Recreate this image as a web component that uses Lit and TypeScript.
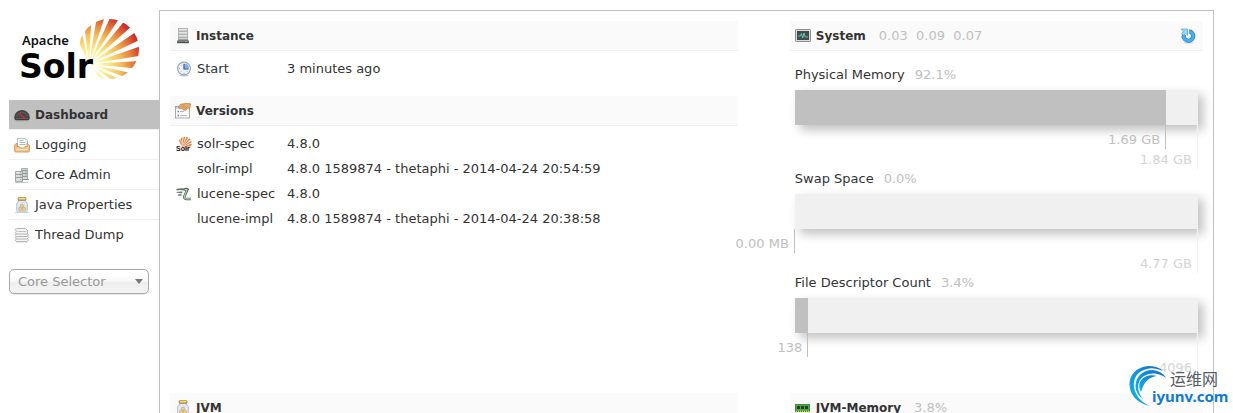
import { LitElement, html, svg, css } from "lit";
import { customElement, property } from "lit/decorators.js";

const icons: Record<string, unknown> = {
  dashboard: svg`
    <path d="M.8 9.800a7.200 6.300 0 0 1 14.400 0v1.600q0 1.600-1.600 1.600H2.400Q.8 13 .8 11.400z" fill="#484848" stroke="#2a2a2a" stroke-width=".7"/>
    <path d="M2.800 9a5.300 4.500 0 0 1 10.400 0" fill="none" stroke="#7c7c7c" stroke-dasharray="1 1.400"/>
    <path d="M2 11.500h12" stroke="#5e5e5e"/>
    <path d="M4.500 6l6.500 5.500" stroke="#d8272d" stroke-width="1.200"/>
    <path d="M2 14h12" stroke="#a8a8a8" stroke-width=".8"/>`,
  logging: svg`
    <path d="M3.500 1.500h7l3 2v8h-10z" fill="#fafcfc" stroke="#9fb3b8" stroke-width=".8"/>
    <path d="M5.500 3.500h4M5.500 5.500h6M5.500 7.500h6" stroke="#8fb9b4" stroke-width=".9"/>
    <path d="M.6 8l2.400-2v3.500h2l1 1.500h4l1-1.500h2V6l2.400 2v6q0 1-1 1H1.600q-1 0-1-1z" fill="#f3c48b" stroke="#c58a4c" stroke-width=".8"/>
    <path d="M2 12.500h12" stroke="#fbe3c1" stroke-width="1.500"/>`,
  cores: svg`
    <path d="M7.500 1.500h6v11h-6z" fill="#d4d7d9" stroke="#9a9ea1" stroke-width=".8"/>
    <path d="M8 3.500h5M8 6.500h5M8 9.500h5" stroke="#8c9195" stroke-width=".9"/>
    <path d="M1.500 4.500h7v10h-7z" fill="#dfe2e3" stroke="#94989b" stroke-width=".8"/>
    <path d="M2 7.500h6M2 10.500h6M9 12.500h6" stroke="#8c9195" stroke-width=".9"/>
    <path d="M6 6h1.500M6 9h1.500M6 12.500h1.500M11 5h1.500M11 8h1.500" stroke="#76a864" stroke-width=".8"/>
    <path d="M1 15.500h13" stroke="#c8c8c8"/>`,
  jar: svg`
    <path d="M4.500 3.500h7q-.3 1.700 1.800 2.800v7.200q0 1.500-1.500 1.500H4.200q-1.500 0-1.500-1.500V6.300q2.100-1.100 1.800-2.800z" fill="#dce9f5" stroke="#9db8cf" stroke-width=".8"/>
    <rect x="4" y=".6" width="8" height="2.800" rx="1" fill="#d6ac54" stroke="#a9853b" stroke-width=".7"/>
    <path d="M5 1.700h6" stroke="#f8e2a0"/>
    <circle cx="8" cy="8.800" r="1.700" fill="#f1cd8c" stroke="#cda263" stroke-width=".6"/>
    <circle cx="6.300" cy="12" r="1.800" fill="#f1cd8c" stroke="#cda263" stroke-width=".6"/>
    <circle cx="9.900" cy="12" r="1.800" fill="#f1cd8c" stroke="#cda263" stroke-width=".6"/>
    <path d="M1 15.500h14" stroke="#c5cbd0" stroke-width=".8"/>`,
  threads: svg`
    <g fill="#f5f5f5" stroke="#a2a2a2" stroke-width=".8">
      <path d="M2 12l1.500-1.500h9L14.500 13l-1.500 1.500H2.500l-1-1z"/>
      <path d="M2 9.500L3.500 8h9l2 2.500-1.500 1.500H2.500l-1-1z"/>
      <path d="M2 7l1.500-1.500h9l2 2.500-1.500 1.500H2.500l-1-1z"/>
      <path d="M1 2.500L2.500 1.500h9l2.500 2.500L13 7H2.500l-1-1.500 1-1.500z"/>
    </g><path d="M3.500 4.500h9" stroke="#b5b5b5" stroke-width=".8"/>
    <path d="M2 15.200h12" stroke="#ccc" stroke-width=".8"/>`,
  server: svg`
    <rect x="3.500" y=".5" width="9" height="12" fill="#cfcfcf" stroke="#a5a5a5" stroke-width=".8"/>
    <path d="M4 3.500h8M4 6.500h8M4 9.500h8" stroke="#a8a8a8" stroke-width=".8"/>
    <path d="M4 1.500h8M4 4.500h8M4 7.500h8" stroke="#e6e6e6"/>
    <path d="M3.300 11.500h9.400L14 13v2.300H2V13z" fill="#7a7a7a"/>
    <path d="M2 14.500h12" stroke="#505050"/><path d="M10 13.500h2" stroke="#55cc55"/>`,
  clock: svg`
    <ellipse cx="8" cy="14.500" rx="5" ry="1.100" fill="#ccc"/>
    <circle cx="8" cy="7.500" r="6.400" fill="#edf1f8" stroke="#98a2ae" stroke-width="1.100"/>
    <path d="M8.500 2.500a5 5 0 0 1 4.500 5H8.500z" fill="#86abee"/>
    <path d="M8 3v5h4.500" fill="none" stroke="#25437d" stroke-width="1.100"/>
    <path d="M3 7.500h1M8 12v1M4.500 4l.5.500M4.500 11l.5-.5M11.500 11l-.5-.5" stroke="#7d8896" stroke-width=".8"/>`,
  versions: svg`
    <rect x=".5" y="3.500" width="14" height="11.500" fill="#fafafa" stroke="#999" stroke-width=".8"/>
    <path d="M1 4.800h8" stroke="#c4c4c4" stroke-width="1.500"/>
    <path d="M2.500 8.500h1.500M2.500 12.500h1.500" stroke="#5d8dc8" stroke-width="1.300"/>
    <path d="M5 8.500h4M5 12.500h7" stroke="#aaa" stroke-width=".8"/>
    <path d="M3.500 4L5.500 1.200 8.500.8 12 .3l3.700.5L15 5l-2.500.5-2 2-2-.5-1-1.500-3 .3z" fill="#e4aa6c" stroke="#b37a40" stroke-width=".6"/>
    <path d="M6 2.500l3 2M8 1.800l3.500 2.700M9.500 6l3-2" stroke="#c18a50" stroke-width=".7"/>`,
  system: svg`
    <rect x=".5" y="1.500" width="15" height="12" rx=".8" fill="#dcdcdc" stroke="#8c8c8c"/>
    <rect x="2" y="3" width="12" height="9" fill="#454951"/>
    <path d="M3 8h2.500l1-2.500 1.200 4.500L9 5l1.200 4H13" fill="none" stroke="#5cd8b5" stroke-width=".9"/>`,
  ram: svg`
    <rect x=".5" y="4.500" width="14" height="7" fill="#48aa43" stroke="#297c2c" stroke-width=".8"/>
    <path d="M2 6h3v3H2zM6 6h3v3H6zM10 6h3v3h-3z" fill="#303530"/>
    <path d="M1 11.500h14" stroke="#e2c54c" stroke-width="1.400" stroke-dasharray="1 1"/>`,
  reload: svg`
    <ellipse cx="8.500" cy="14.800" rx="5" ry="1" fill="#ddd"/>
    <path d="M9 3.400A4.700 4.700 0 1 1 4 6.500" fill="none" stroke="#2b7fbd" stroke-width="4.200"/>
    <path d="M9 3.400A4.700 4.700 0 1 1 4 6.500" fill="none" stroke="#48aeea" stroke-width="3"/>
    <path d="M1.200 1h6.300v6.300L5.600 5.500 3.600 7.500 1.700 5.600 3.300 3.400z" fill="#9bd3f3" stroke="#4a9ac8" stroke-width=".6"/>`,
  lucene: svg`
    <path d="M.5 3q4-1.500 9-.3L8 4.500Q4 3.500.5 4.500zM.8 6q3-.8 6-.3L5.500 7.500Q3 6.500.8 7zM2 8.500q2-.5 4 0L5 10q-1.500-.8-3-.3z" fill="#64716c"/>
    <path d="M8 4q2-1.500 3.500-.5L8.500 10q-.8 2.800 2 3h4.500" fill="none" stroke="#52605a" stroke-width="2.600"/>
    <path d="M8.500 4q1.500-1 2.500-.2L8.500 10q-.5 2.500 2 2.800h4.500" fill="none" stroke="#a4d8a5" stroke-width="1.200"/>`,
};

/* Rays fan out from the lower left of the disc: [direction, half width] in degrees. */
const RAYS = [
  [109, 6], [92, 5], [76, 4.500], [61, 4.500], [46, 4.500], [30, 4.500],
  [14, 5], [-1, 4.500], [-16, 4], [-31, 4], [-48, 4],
];

function rays(ox: number, oy: number, reach: number) {
  const at = (deg: number) => {
    const a = (deg * Math.PI) / 180;
    return `${(ox + reach * Math.cos(a)).toFixed(2)},${(oy - reach * Math.sin(a)).toFixed(2)}`;
  };
  return RAYS.map(
    ([d, w]) => svg`<polygon points="${ox},${oy} ${at(d - w)} ${at(d + w)}"/>`,
  );
}

icons.solr = svg`
  <defs><clipPath id="disc"><circle cx="9" cy="7.500" r="6.800"/></clipPath></defs>
  <g fill="#e17a3b" clip-path="url(#disc)">${rays(6, 11, 16)}</g>
  <text x="0" y="15" font-size="7" font-weight="700" font-family="Liberation Sans" fill="#111">Solr</text>`;

const icon = (name: string) =>
  html`<svg class="icon" viewBox="0 0 16 16" aria-hidden="true">${icons[name]}</svg>`;

@customElement("usage-bar")
class UsageBar extends LitElement {
  @property() label = "";
  @property({ type: Number }) percent = 0;
  @property() used = "";
  @property() total = "";

  static styles = css`
    :host { display: block; padding: 0 5px; }
    .label { display: flex; gap: 10px; margin: 0; line-height: 30px; font-size: 13px; font-weight: 400; }
    .percent { color: #c0c0c0; }
    .track { height: 35px; background: #f0f0f0; box-shadow: 5px 5px 10px #c0c0c0; }
    .fill { height: 100%; background: #c0c0c0; }
    .scale { display: grid; height: 39px; line-height: 20px; position: relative; }
    .mark { grid-area: 1 / 1; display: flex; justify-content: flex-end; align-items: flex-start; }
    .value {
      box-sizing: border-box; flex: none; white-space: nowrap; padding-right: 5px;
      border-right: 1px solid #c0c0c0; color: #c0c0c0; height: 24px; padding-top: 5px;
    }
    .max { height: 44px; padding-top: 25px; color: #d4d4d4; border-color: #f0f0f0; }
  `;

  render() {
    const width = `width:${this.percent}%`;
    return html`
      <h3 class="label">${this.label}<span class="percent">${this.percent.toFixed(1)}%</span></h3>
      <div class="track"><div class="fill" style=${width}></div></div>
      <div class="scale">
        <div class="mark"><span class="value max">${this.total}</span></div>
        <div class="mark" style=${width}><span class="value">${this.used}</span></div>
      </div>`;
  }
}

@customElement("app-root")
class AppRoot extends LitElement {
  static styles = css`
    :host {
      display: block; height: 100vh; overflow: hidden; position: relative;
      box-sizing: border-box; padding: 10px 19px 0 9px; background: #fff; color: #333;
      font: 13px "DejaVu Sans", Verdana, sans-serif;
    }
    .page { display: flex; align-items: stretch; min-height: 100%; }
    .side { flex: none; width: 150px; }
    .logo { display: block; width: 150px; height: 90px; }
    .icon { width: 16px; height: 16px; flex: none; display: block; }
    .menu { list-style: none; margin: 0; padding: 0; }
    .item { border-bottom: 1px solid #f0f0f0; }
    .item:last-child { border-bottom-color: transparent; }
    .link {
      display: flex; align-items: center; gap: 5px; height: 29px; padding-left: 5px;
      color: #333; text-decoration: none;
    }
    .active { background: #c0c0c0; font-weight: 700; font-size: 12px; }
    .picker { display: grid; width: 140px; margin-top: 19px; align-items: center; }
    .select {
      grid-area: 1 / 1; appearance: none; height: 25px; padding: 0 8px; margin: 0;
      border: 1px solid #aaa; border-radius: 5px; color: #999; font: inherit;
      background: linear-gradient(#fff 20%, #f6f6f6 50%, #eee 52%, #f4f4f4);
      box-shadow: 0 1px 1px rgba(0, 0, 0, 0.1);
    }
    .arrow { grid-area: 1 / 1; justify-self: end; width: 8px; height: 5px; margin-right: 6px; pointer-events: none; }
    .content {
      flex: 1; min-width: 0; border: 1px solid #c0c0c0; padding: 10px;
      display: grid; grid-template-columns: 55% 40%; justify-content: space-between;
      align-content: start; row-gap: 15px;
    }
    .stack { display: flex; flex-direction: column; gap: 15px; min-width: 0; }
    .title {
      display: flex; align-items: center; gap: 5px; height: 29px; margin: 0; padding: 0 7px 0 5px;
      background: #fafafa; border-bottom: 1px solid #f0f0f0; font-size: 12px;
    }
    .figures { font-size: 13px; font-weight: 400; color: #c0c0c0; margin-left: 8px; white-space: pre; }
    .reload { margin-left: auto; padding: 0; border: 0; background: none; cursor: pointer; }
    .facts { margin: 5px 0 0; padding-left: 6px; }
    .row { display: grid; grid-template-columns: 21px 90px 1fr; align-items: center; height: 25px; }
    .key, .data { margin: 0; white-space: nowrap; }
    .bars { padding: 9px 0 6px; }
    .watermark { position: absolute; right: 3px; bottom: 5px; width: 102px; height: 44px; }
  `;

  private fact(key: string, value: string, pic = "") {
    return html`<div class="row">
      <dt>${pic ? icon(pic) : ""}</dt>
      <dt class="key">${key}</dt><dd class="data">${value}</dd>
    </div>`;
  }

  private item(label: string, pic: string, active = false) {
    return html`<li class="item">
      <a class="link ${active ? "active" : ""}" href="#${label}">${icon(pic)}<span>${label}</span></a>
    </li>`;
  }

  render() {
    return html`
      <div class="page">
        <div class="side">
          <svg class="logo" viewBox="9 10 150 90" role="img" aria-label="Apache Solr">
            <defs>
              <radialGradient id="heat" gradientUnits="userSpaceOnUse" cx="90" cy="66" r="55">
                <stop offset=".1" stop-color="#fffce0"/><stop offset=".3" stop-color="#fdec8c"/>
                <stop offset=".55" stop-color="#f5c05c"/>
                <stop offset=".78" stop-color="#e47a38"/><stop offset="1" stop-color="#c9252c"/>
              </radialGradient>
              <clipPath id="sun"><circle cx="109" cy="49" r="30"/></clipPath>
            </defs>
            <g fill="url(#heat)" clip-path="url(#sun)">${rays(89, 64, 70)}</g>
            <text x="22" y="45" font-family="Noto Sans" font-weight="600" font-size="13" fill="#111">Apache</text>
            <text x="19" y="78" font-family="DejaVu Sans" font-weight="700" font-size="33" fill="#000">Solr</text>
          </svg>
          <nav>
            <ul class="menu">
              ${this.item("Dashboard", "dashboard", true)}
              ${this.item("Logging", "logging")}
              ${this.item("Core Admin", "cores")}
              ${this.item("Java Properties", "jar")}
              ${this.item("Thread Dump", "threads")}
            </ul>
          </nav>
          <div class="picker">
            <select class="select" aria-label="Core Selector"><option>Core Selector</option></select>
            <svg class="arrow" viewBox="0 0 8 5" aria-hidden="true"><path d="M0 0h8L4 5z" fill="#777"/></svg>
          </div>
        </div>
        <main class="content">
          <div class="stack">
            <section>
              <h2 class="title">${icon("server")}<span>Instance</span></h2>
              <dl class="facts">${this.fact("Start", "3 minutes ago", "clock")}</dl>
            </section>
            <section>
              <h2 class="title">${icon("versions")}<span>Versions</span></h2>
              <dl class="facts">
                ${this.fact("solr-spec", "4.8.0", "solr")}
                ${this.fact("solr-impl", "4.8.0 1589874 - thetaphi - 2014-04-24 20:54:59")}
                ${this.fact("lucene-spec", "4.8.0", "lucene")}
                ${this.fact("lucene-impl", "4.8.0 1589874 - thetaphi - 2014-04-24 20:38:58")}
              </dl>
            </section>
          </div>
          <section>
            <h2 class="title">
              ${icon("system")}<span>System</span><span class="figures">0.03  0.09  0.07</span>
              <button class="reload" aria-label="Reload">${icon("reload")}</button>
            </h2>
            <div class="bars">
              <usage-bar label="Physical Memory" percent="92.1" used="1.69 GB" total="1.84 GB"></usage-bar>
              <usage-bar label="Swap Space" percent="0" used="0.00 MB" total="4.77 GB"></usage-bar>
              <usage-bar label="File Descriptor Count" percent="3.37" used="138" total="4096"></usage-bar>
            </div>
          </section>
          <section><h2 class="title">${icon("jar")}<span>JVM</span></h2></section>
          <section>
            <h2 class="title">${icon("ram")}<span>JVM-Memory</span><span class="figures">3.8%</span></h2>
          </section>
        </main>
      </div>
      <svg class="watermark" viewBox="1128 364 102 44" role="img" aria-label="运维网 iyunv.com">
        <defs>
          <linearGradient id="swirl" x1="0" y1="1" x2="1" y2="0">
            <stop offset="0" stop-color="#13b5ee"/><stop offset="1" stop-color="#1272c6"/>
          </linearGradient>
        </defs>
        <g fill="url(#swirl)">
          <path d="M1150 406C1124 401 1122 369 1148 366Q1158 366 1163 371Q1154 367 1147 369C1128 373 1130 398 1150 406z"/>
          <path d="M1143 399C1128 388 1138 369 1153 370Q1162 371 1166 378Q1158 372 1149 374C1137 377 1135 389 1143 399z"/>
          <path d="M1141 392C1135 381 1146 373 1157 376Q1145 377 1141 392z"/>
        </g>
        <text x="1170" y="385" font-family="Noto Sans CJK SC" font-size="16" fill="#555b66">运维网</text>
        <text x="1152" y="402" font-family="Noto Sans, Open Sans" font-weight="700" font-size="15" fill="#0f7bd2">iyunv.com</text>
      </svg>`;
  }
}
